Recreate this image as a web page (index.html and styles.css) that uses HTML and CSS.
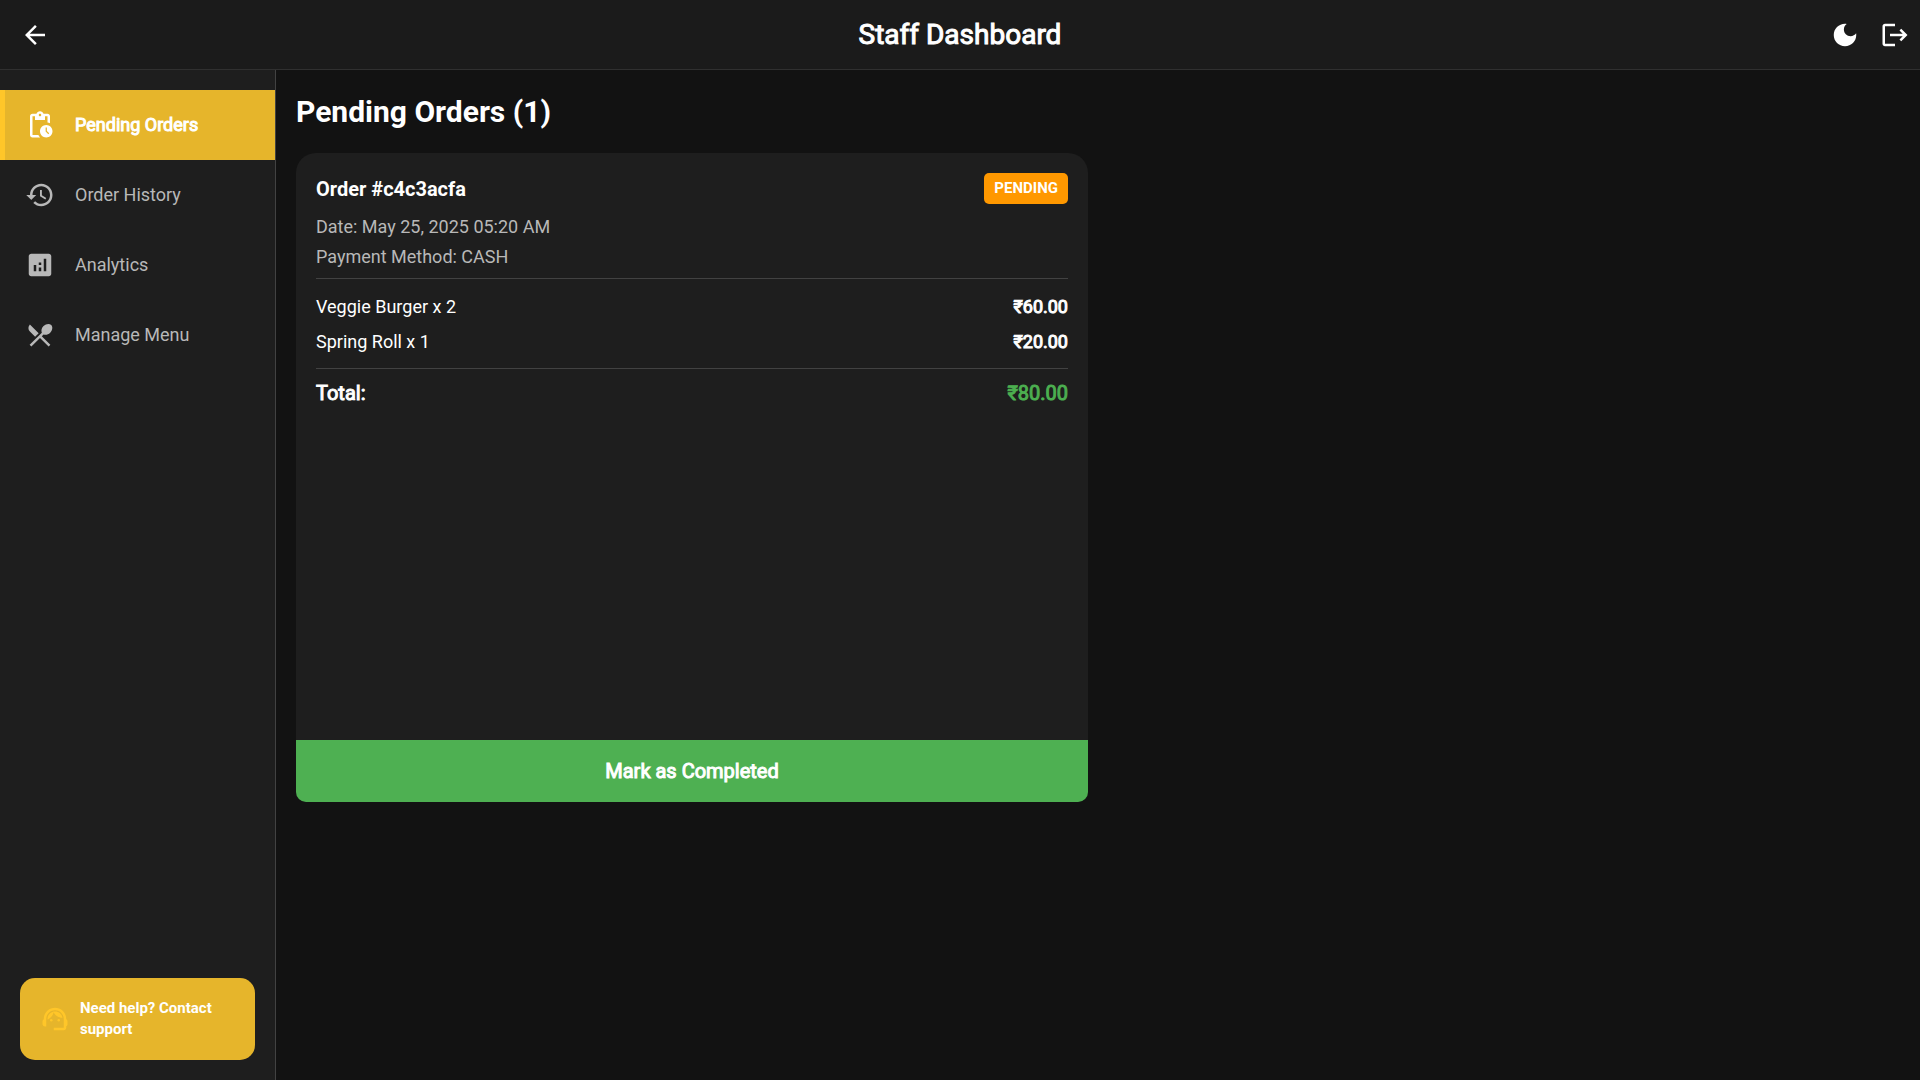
FILE: index.html
```html
<!DOCTYPE html>
<html lang="en">
<head>
<meta charset="utf-8">
<meta name="viewport" content="width=device-width, initial-scale=1">
<title>Staff Dashboard</title>
<link rel="stylesheet" href="styles.css">
</head>
<body>
<div class="app">
  <header class="topbar">
    <div class="topbar-start">
      <button class="icon-button" type="button" aria-label="Back">
        <svg class="icon" viewBox="0 0 24 24"><path d="M20 11H7.83l5.59-5.59L12 4l-8 8 8 8 1.41-1.41L7.83 13H20v-2z"/></svg>
      </button>
    </div>
    <h1 class="topbar-title strong">Staff Dashboard</h1>
    <div class="topbar-end">
      <button class="icon-button" type="button" aria-label="Toggle dark mode">
        <svg class="icon" viewBox="0 0 24 24"><path d="M12 3c-4.97 0-9 4.03-9 9s4.03 9 9 9 9-4.03 9-9c0-.46-.04-.92-.1-1.36-.98 1.37-2.58 2.26-4.4 2.26-2.98 0-5.4-2.42-5.4-5.4 0-1.81.89-3.42 2.26-4.4-.44-.06-.9-.1-1.36-.1z"/></svg>
      </button>
      <button class="icon-button" type="button" aria-label="Log out">
        <svg class="icon" viewBox="0 0 24 24"><path d="M17 7l-1.41 1.41L18.17 11H8v2h10.17l-2.58 2.58L17 17l5-5zM4 5h8V3H4c-1.1 0-2 .9-2 2v14c0 1.1.9 2 2 2h8v-2H4V5z"/></svg>
      </button>
    </div>
  </header>
  <div class="body">
    <aside class="sidebar">
      <nav class="nav">
        <a class="nav-item nav-item-active strong" href="#pending" aria-current="page">
          <svg class="icon" viewBox="0 0 24 24"><path d="M17 12c-2.76 0-5 2.24-5 5s2.24 5 5 5 5-2.24 5-5-2.24-5-5-5zm1.65 7.35L16.5 17.2V14h1v2.79l1.85 1.85-.7.71zM18 3h-3.18C14.4 1.84 13.3 1 12 1s-2.4.84-2.82 2H6c-1.1 0-2 .9-2 2v15c0 1.1.9 2 2 2h6.11c-.59-.57-1.07-1.25-1.42-2H6V5h2v3h8V5h2v5.08c.71.1 1.38.31 2 .6V5c0-1.1-.9-2-2-2zm-6 2c-.55 0-1-.45-1-1s.45-1 1-1 1 .45 1 1-.45 1-1 1z"/></svg>
          <span>Pending Orders</span>
        </a>
        <a class="nav-item" href="#history">
          <svg class="icon" viewBox="0 0 24 24"><path d="M13 3c-4.97 0-9 4.03-9 9H1l3.89 3.89.07.14L9 12H6c0-3.87 3.13-7 7-7s7 3.13 7 7-3.13 7-7 7c-1.93 0-3.68-.79-4.94-2.06l-1.42 1.42C8.27 19.99 10.51 21 13 21c4.97 0 9-4.03 9-9s-4.03-9-9-9zm-1 5v5l4.28 2.54.72-1.21-3.5-2.08V8H12z"/></svg>
          <span>Order History</span>
        </a>
        <a class="nav-item" href="#analytics">
          <svg class="icon" viewBox="0 0 24 24"><path d="M19 3H5c-1.1 0-2 .9-2 2v14c0 1.1.9 2 2 2h14c1.1 0 2-.9 2-2V5c0-1.1-.9-2-2-2zM9 17H7v-5h2v5zm4 0h-2v-3h2v3zm0-5h-2v-2h2v2zm4 5h-2V7h2v10z"/></svg>
          <span>Analytics</span>
        </a>
        <a class="nav-item" href="#menu">
          <svg class="icon" viewBox="0 0 24 24"><path d="M8.1 13.34l2.83-2.83L3.91 3.5c-1.56 1.56-1.56 4.09 0 5.66l4.19 4.18zm6.78-1.81c1.53.71 3.68.21 5.27-1.38 1.91-1.91 2.28-4.65.81-6.12-1.46-1.46-4.2-1.1-6.12.81-1.59 1.59-2.09 3.74-1.38 5.27L3.7 19.87l1.41 1.41L12 14.41l6.88 6.88 1.41-1.41L13.41 13l1.47-1.47z"/></svg>
          <span>Manage Menu</span>
        </a>
      </nav>
      <a class="support" href="#support">
        <svg class="icon support-icon" viewBox="0 0 24 24"><path d="M21 12.22C21 6.73 16.74 3 12 3c-4.69 0-9 3.65-9 9.28-.6.34-1 .98-1 1.72v2c0 1.1.9 2 2 2h1v-6.1c0-3.87 3.13-7 7-7s7 3.13 7 7V19h-8v2h8c1.1 0 2-.9 2-2v-1.22c.59-.31 1-.92 1-1.64v-2.3c0-.7-.41-1.31-1-1.62z"/><circle cx="9" cy="13" r="1"/><circle cx="15" cy="13" r="1"/><path d="M18 11.03C17.52 8.18 15.04 6 12.05 6c-3.03 0-6.29 2.51-6.03 6.45 2.47-1.01 4.33-3.21 4.86-5.89 1.31 2.63 4 4.44 7.12 4.47z"/></svg>
        <span>Need help? Contact support</span>
      </a>
    </aside>
    <main class="content">
      <h2 class="content-title">Pending Orders (1)</h2>
      <div class="orders">
        <article class="order">
          <div class="order-details">
            <div class="order-head">
              <h3 class="order-id">Order #c4c3acfa</h3>
              <span class="badge">PENDING</span>
            </div>
            <p class="order-meta">Date: May 25, 2025 05:20 AM</p>
            <p class="order-meta">Payment Method: CASH</p>
            <ul class="items">
              <li class="item"><span>Veggie Burger x 2</span><span class="strong">₹60.00</span></li>
              <li class="item"><span>Spring Roll x 1</span><span class="strong">₹20.00</span></li>
            </ul>
            <div class="total strong"><span>Total:</span><span class="total-amount">₹80.00</span></div>
          </div>
          <button class="complete strong" type="button">Mark as Completed</button>
        </article>
      </div>
    </main>
  </div>
</div>
</body>
</html>
```
FILE: styles.css
```css
* {
  box-sizing: border-box;
}

body {
  margin: 0;
  background: #121212;
  color: #fff;
  font-family: Roboto, "Liberation Sans", sans-serif;
  font-size: 18px;
  line-height: 30px;
}

h1, h2, h3, p, ul {
  margin: 0;
  padding: 0;
  font-weight: 400;
}

a {
  color: inherit;
  text-decoration: none;
}

button {
  border: 0;
  padding: 0;
  background: none;
  color: inherit;
  font: inherit;
  cursor: pointer;
}

/* Emphasis thickens the regular face and keeps its widths */
.strong {
  -webkit-text-stroke: 1px currentColor;
}

.icon {
  display: block;
  flex: none;
  width: 30px;
  height: 30px;
  fill: currentColor;
}

.app {
  display: flex;
  flex-direction: column;
  min-height: 100vh;
}

.topbar {
  display: grid;
  grid-template-columns: 1fr auto 1fr;
  align-items: center;
  height: 70px;
  padding: 0 10px;
  background: #1b1b1b;
  border-bottom: 1px solid #303030;
}

.topbar-title {
  font-size: 28px;
}

.topbar-start {
  display: flex;
  padding-left: 10px;
}

.topbar-end {
  display: flex;
  justify-content: flex-end;
  gap: 20px;
}

.body {
  display: flex;
  flex: 1;
}

.sidebar {
  display: flex;
  flex: none;
  flex-direction: column;
  justify-content: space-between;
  width: 276px;
  padding: 20px 0;
  background: #1e1e1e;
  border-right: 1px solid #424242;
}

.nav-item {
  display: flex;
  align-items: center;
  gap: 20px;
  height: 70px;
  padding-left: 20px;
  border-left: 5px solid transparent;
  color: #b8b8b8;
}

.nav-item-active {
  border-left-color: #ffc629;
  background: #e6b52b;
  color: #fff;
}

.support {
  display: flex;
  align-items: center;
  gap: 10px;
  margin: 0 20px;
  padding: 20px;
  border-radius: 15px;
  background: #e6b52b;
  font-size: 15px;
  font-weight: 700;
  line-height: 21px;
}

.support-icon {
  color: #ffc629;
}

.content {
  flex: 1;
  padding: 20px;
}

.content-title {
  margin-bottom: 20px;
  font-size: 30px;
  font-weight: 700;
  line-height: 43px;
}

.orders {
  display: grid;
  grid-template-columns: repeat(2, minmax(0, 1fr));
  gap: 20px;
}

.order {
  display: flex;
  flex-direction: column;
  justify-content: space-between;
  aspect-ratio: 792 / 649;
  overflow: hidden;
  border-radius: 20px 20px 10px 10px;
  background: #1e1e1e;
}

.order-details {
  padding: 20px;
}

.order-head {
  display: flex;
  align-items: center;
  justify-content: space-between;
  margin-bottom: 8px;
}

.order-id {
  font-size: 20px;
  font-weight: 700;
}

.badge {
  padding: 5px 10px;
  border-radius: 5px;
  background: #ff9800;
  font-size: 15px;
  font-weight: 700;
  line-height: 21px;
}

.order-meta {
  color: #b8b8b8;
}

.items {
  margin: 6px 0 4px;
  padding: 10px 0 9px;
  border-top: 1px solid #424242;
  border-bottom: 1px solid #424242;
  list-style: none;
}

.item {
  display: flex;
  justify-content: space-between;
  line-height: 35px;
}

.total {
  display: flex;
  justify-content: space-between;
  padding-top: 5px;
  font-size: 20px;
}

.total-amount {
  color: #4caf50;
}

.complete {
  height: 62px;
  background: #4eb052;
  font-size: 20px;
}
```
